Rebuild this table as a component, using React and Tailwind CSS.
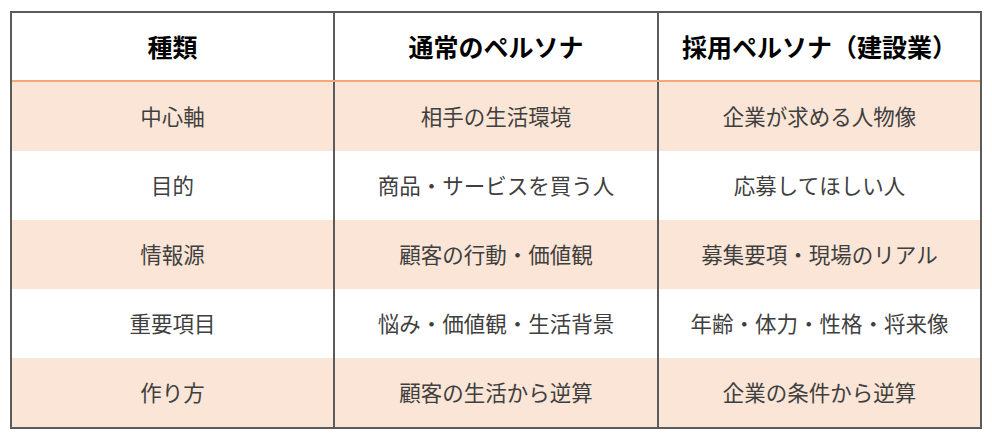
const rows = [
  ["中心軸", "相手の生活環境", "企業が求める人物像"],
  ["目的", "商品・サービスを買う人", "応募してほしい人"],
  ["情報源", "顧客の行動・価値観", "募集要項・現場のリアル"],
  ["重要項目", "悩み・価値観・生活背景", "年齢・体力・性格・将来像"],
  ["作り方", "顧客の生活から逆算", "企業の条件から逆算"],
];

const headers = ["種類", "通常のペルソナ", "採用ペルソナ（建設業）"];

export default function App() {
  return (
    <div
      className="w-[992px] h-[438px] bg-white pt-[11px] pl-[10px]"
      style={{ fontFamily: '"Noto Sans CJK JP", "Noto Sans", sans-serif' }}
    >
      <div className="w-[972px] border-2 border-[#5b5b5b]">
        {/* Header */}
        <div className="grid grid-cols-[321px_324px_323px] h-[69px] border-b-2 border-[#f4a879]">
          {headers.map((h, i) => (
            <div
              key={h}
              className={`flex items-center justify-center text-[25px] font-bold text-black ${i > 0 ? "border-l-2 border-[#5b5b5b]" : ""}`}
            >
              {h}
            </div>
          ))}
        </div>

        {/* Body */}
        {rows.map((r, ri) => (
          <div
            key={r[0]}
            className={`grid grid-cols-[321px_324px_323px] h-[69px] ${ri % 2 === 0 ? "bg-[#fbe5d6]" : "bg-white"}`}
          >
            {r.map((c, i) => (
              <div
                key={i}
                className={`flex items-center justify-center text-[21.5px] text-[#3f3f3f] ${i > 0 ? "border-l-2 border-[#5b5b5b]" : ""}`}
              >
                {c}
              </div>
            ))}
          </div>
        ))}
      </div>
    </div>
  );
}
